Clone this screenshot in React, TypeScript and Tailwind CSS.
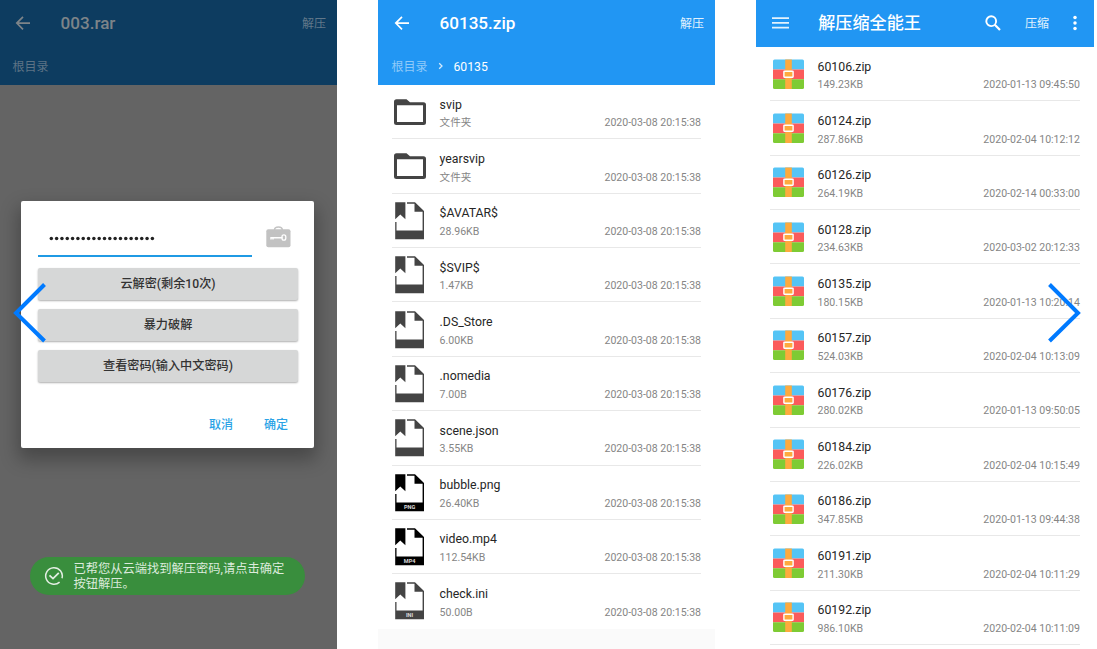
import React from "react";

type FileKind = "folder" | "file" | "media";
interface Entry {
  name: string;
  size: string;
  kind: FileKind;
  label?: string;
}

const entries: Entry[] = [
  { name: "svip", size: "文件夹", kind: "folder" },
  { name: "yearsvip", size: "文件夹", kind: "folder" },
  { name: "$AVATAR$", size: "28.96KB", kind: "file" },
  { name: "$SVIP$", size: "1.47KB", kind: "file" },
  { name: ".DS_Store", size: "6.00KB", kind: "file" },
  { name: ".nomedia", size: "7.00B", kind: "file" },
  { name: "scene.json", size: "3.55KB", kind: "file" },
  { name: "bubble.png", size: "26.40KB", kind: "media", label: "PNG" },
  { name: "video.mp4", size: "112.54KB", kind: "media", label: "MP4" },
  { name: "check.ini", size: "50.00B", kind: "file", label: "INI" },
];

const archives: [string, string, string][] = [
  ["60106.zip", "149.23KB", "2020-01-13 09:45:50"],
  ["60124.zip", "287.86KB", "2020-02-04 10:12:12"],
  ["60126.zip", "264.19KB", "2020-02-14 00:33:00"],
  ["60128.zip", "234.63KB", "2020-03-02 20:12:33"],
  ["60135.zip", "180.15KB", "2020-01-13 10:20:14"],
  ["60157.zip", "524.03KB", "2020-02-04 10:13:09"],
  ["60176.zip", "280.02KB", "2020-01-13 09:50:05"],
  ["60184.zip", "226.02KB", "2020-02-04 10:15:49"],
  ["60186.zip", "347.85KB", "2020-01-13 09:44:38"],
  ["60191.zip", "211.30KB", "2020-02-04 10:11:29"],
  ["60192.zip", "986.10KB", "2020-02-04 10:11:09"],
];

function BackArrow() {
  return (
    <svg className="h-[15px] w-[16px] shrink-0" viewBox="0 0 16 15" fill="none" stroke="currentColor" strokeWidth="1.7">
      <path d="M15 7.1H2M8 0.9L1.8 7.1L8 13.3" />
    </svg>
  );
}

function FolderIcon() {
  return (
    <svg className="mt-[1px] h-[27px] w-[32px]" viewBox="0 0 32 27">
      <path
        fill="#444"
        fillRule="evenodd"
        d="M2.5 0.3H12.5L16 3.3H29.5Q32 3.3 32 5.8V23.5Q32 26 29.5 26H2.5Q0 26 0 23.5V2.8Q0 0.3 2.5 0.3ZM3 6.3V23H29V6.3Z"
      />
    </svg>
  );
}

function FileIcon({ label, color }: { label?: string; color: string }) {
  return (
    <svg className="mt-[1px] h-[38px] w-[30px]" viewBox="0 0 30 38">
      <path fill={color} d="M1.2 0.3H11.4V17.3L6.3 12.5L1.2 17.3Z" />
      <path fill={color} d="M13 0.3H21L30 9V37.3H1.2V20H2.5V28.6H28.6V9.8H20.5V1.7H13Z" />
      {label && (
        <text
          x="15.6"
          y="34.8"
          textAnchor="middle"
          fill="#ddd"
          fontSize="5.6"
          fontWeight="700"
          className="font-['Roboto',sans-serif]"
        >
          {label}
        </text>
      )}
    </svg>
  );
}

function ZipIcon() {
  return (
    <svg className="mt-[1px] ml-[1px] h-[31px] w-[31px]" viewBox="0 0 31 31">
      <path fill="#55c4f5" d="M0 10.5V2Q0 0.5 1.5 0.5H29.5Q31 0.5 31 2V10.5Z" />
      <path fill="#fb5b5b" d="M0 10.5H31V20.3H0Z" />
      <path fill="#7ecb34" d="M0 20.3H31V28.5Q31 30 29.5 30H1.5Q0 30 0 28.5Z" />
      <path fill="#fdaa3e" d="M12.2 0.5H18.8V30H12.2Z" />
      <rect x="10.9" y="12.2" width="9.2" height="6" rx="0.4" fill="#fdaa3e" stroke="#fff" strokeWidth="1.4" />
    </svg>
  );
}

interface RowProps {
  icon: React.ReactNode;
  name: string;
  size: string;
  date: string;
  divider?: boolean;
}

function Row({ icon, name, size, date, divider = true }: RowProps) {
  return (
    <div className={`mx-[14px] flex h-[54.37px] shrink-0 border-b ${divider ? "border-[#e8e8e8]" : "border-transparent"}`}>
      <div className="flex w-[47.6px] shrink-0 items-center pl-[2px]">{icon}</div>
      <div className="flex flex-1 flex-col pt-[10.5px]">
        <div className="h-[18.8px] text-[12.3px] leading-[18px] text-[#262626]">{name}</div>
        <div className="flex h-[18px] justify-between text-[10.55px] leading-[18px] text-[#858585]">
          <span>{size}</span>
          <span>{date}</span>
        </div>
      </div>
    </div>
  );
}

function PasswordPanel() {
  return (
    <section className="relative flex h-full w-[337px] shrink-0 flex-col bg-[#646464]">
      <header className="h-[85px] bg-[#0d3c60] text-[#7d8489]">
        <div className="flex h-[47px] items-center pr-[11px] pl-[15px]">
          <BackArrow />
          <h1 className="ml-[29.5px] flex-1 pt-[1px] text-[17.1px] font-medium">003.rar</h1>
          <span className="text-[12px] text-[#62788a]">解压</span>
        </div>
        <div className="flex h-[38px] items-center pt-[2px] pl-[12.5px] text-[12px] text-[#5d7385]">根目录</div>
      </header>
      <div className="mx-[21px] mt-[115.5px] flex h-[247.5px] w-[293px] flex-col rounded-[2px] bg-white px-[17px] shadow-[0_9px_18px_3px_rgba(0,0,0,0.28)]">
        <div className="flex h-[56px]">
          <div className="flex w-[214px] flex-col justify-end">
            <svg className="mb-[14px] ml-[11px] h-[5px] w-[107px]" viewBox="0 0 107 5" fill="#222">
              {Array.from({ length: 20 }, (_, i) => (
                <circle key={i} cx={2.3 + i * 5.32} cy="2.5" r="1.75" />
              ))}
            </svg>
            <div className="h-[2px] bg-[#1f9ae4]" />
          </div>
          <svg className="mt-[25px] ml-[14px] h-[22px] w-[25px]" viewBox="0 0 25 22">
            <path d="M8.5 4Q8.5 1 12.4 1Q16.3 1 16.3 4" fill="none" stroke="#c4c4c4" strokeWidth="1.5" />
            <rect x="0.3" y="3.3" width="24.2" height="18" rx="2" fill="#c2c2c2" />
            <path d="M5 13.6V11.8H16.5M7 11.8V13.4" fill="none" stroke="#fff" strokeWidth="1.4" />
            <rect x="16" y="8.8" width="3.8" height="5.4" rx="1.9" fill="none" stroke="#fff" strokeWidth="1.3" />
          </svg>
        </div>
        <div className="mt-[11.5px] flex flex-col gap-[9px] text-[12.15px] font-medium text-[#333]">
          {["云解密(剩余10次)", "暴力破解", "查看密码(输入中文密码)"].map((t) => (
            <button
              key={t}
              className="flex h-[32px] w-[260px] items-center justify-center rounded-[2px] bg-[#d6d7d7] pt-[1px] shadow-[0_1px_2px_rgba(0,0,0,0.32)]"
            >
              {t}
            </button>
          ))}
        </div>
        <div className="mt-[33.5px] flex justify-end gap-[31px] pr-[9px] text-[12px] leading-[18px] font-medium text-[#2ba3e6]">
          <span>取消</span>
          <span>确定</span>
        </div>
      </div>
      <div className="mt-[109px] ml-[30px] flex h-[38px] w-[275px] items-center rounded-full bg-[#398e3d] pl-[14px]">
        <svg className="h-[20px] w-[20px] shrink-0" viewBox="0 0 20 20" fill="none" stroke="#e3eee3" strokeWidth="1.5">
          <path d="M15.6 16.1A8.3 8.3 0 1 1 18 12.2" />
          <path d="M5.5 9.3L9 12.6L14.8 6.8" strokeWidth="1.8" />
        </svg>
        <p className="ml-[9.5px] pt-[1px] text-[12.25px] leading-[14.5px] whitespace-nowrap text-[#dcebdc]">
          已帮您从云端找到解压密码,请点击确定
          <br />
          按钮解压。
        </p>
      </div>
    </section>
  );
}

function FolderPanel() {
  return (
    <section className="flex h-full w-[337px] shrink-0 flex-col bg-[#fafafa]">
      <header className="h-[85px] shrink-0 bg-[#2196f3] text-white">
        <div className="flex h-[47px] items-center pr-[11px] pl-[16px]">
          <BackArrow />
          <h1 className="ml-[29.5px] flex-1 pt-[1px] text-[17.1px] font-medium">60135.zip</h1>
          <span className="text-[12px] text-[#e3f2fd]">解压</span>
        </div>
        <div className="flex h-[38px] items-center pt-[2px] pl-[13.5px] text-[12px]">
          <span className="text-[#90caf9]">根目录</span>
          <svg className="mr-[9.5px] mb-[3px] ml-[10.5px] h-[8px] w-[6px]" viewBox="0 0 6 8" fill="none" stroke="#d3eafd" strokeWidth="1.3">
            <path d="M1.2 1.2L4 4L1.2 6.8" />
          </svg>
          <span className="text-[12.2px]">60135</span>
        </div>
      </header>
      <div className="flex flex-col bg-white">
        {entries.map((e, i) => (
          <Row
            key={e.name}
            icon={
              e.kind === "folder" ? <FolderIcon /> : <FileIcon label={e.label} color={e.kind === "media" ? "#000" : "#444"} />
            }
            name={e.name}
            size={e.size}
            date="2020-03-08 20:15:38"
            divider={i < entries.length - 1}
          />
        ))}
      </div>
    </section>
  );
}

function ArchivePanel() {
  return (
    <section className="flex h-full w-[338px] shrink-0 flex-col bg-white">
      <header className="flex h-[47px] shrink-0 items-center bg-[#2196f3] px-[16px] text-white">
        <svg className="mb-[2px] h-[12px] w-[17px]" viewBox="0 0 17 12" fill="#e3f2fd">
          <path d="M0 0.3H17V2H0ZM0 5H17V6.7H0ZM0 9.7H17V11.4H0Z" />
        </svg>
        <h1 className="ml-[29.4px] flex-1 text-[17.1px] font-medium">解压缩全能王</h1>
        <svg className="mb-[2px] h-[16px] w-[16px]" viewBox="0 0 16 16" fill="none" stroke="#fff" strokeWidth="1.9">
          <circle cx="6.2" cy="6.2" r="4.9" />
          <path d="M9.8 9.8L15 15" strokeWidth="2.2" />
        </svg>
        <span className="ml-[24px] text-[12px] text-[#e3f2fd]">压缩</span>
        <svg className="mr-[1px] mb-[1px] ml-[24px] h-[16px] w-[4px]" viewBox="0 0 4 16" fill="#fff">
          <circle cx="2" cy="2.5" r="1.75" />
          <circle cx="2" cy="8" r="1.75" />
          <circle cx="2" cy="13.5" r="1.75" />
        </svg>
      </header>
      <div className="flex flex-col">
        {archives.map(([name, size, date]) => (
          <Row key={name} icon={<ZipIcon />} name={name} size={size} date={date} />
        ))}
      </div>
    </section>
  );
}

export default function App() {
  return (
    <main className="relative flex h-[649px] w-[1097px] overflow-hidden bg-white font-['Roboto','Noto_Sans_CJK_SC',sans-serif]">
      <PasswordPanel />
      <div className="w-[41px] shrink-0" />
      <FolderPanel />
      <div className="w-[40.9px] shrink-0" />
      <ArchivePanel />
      <button className="absolute top-[282px] left-[13px]" aria-label="Previous">
        <svg className="h-[62px] w-[34px]" viewBox="0 0 34 62" fill="none" stroke="#007aff" strokeWidth="4">
          <path d="M31.5 2.5L3 31L31.5 59" />
        </svg>
      </button>
      <button className="absolute top-[282px] left-[1047px]" aria-label="Next">
        <svg className="h-[62px] w-[34px]" viewBox="0 0 34 62" fill="none" stroke="#007aff" strokeWidth="4">
          <path d="M2.5 2.5L31 31L2.5 59" />
        </svg>
      </button>
    </main>
  );
}
